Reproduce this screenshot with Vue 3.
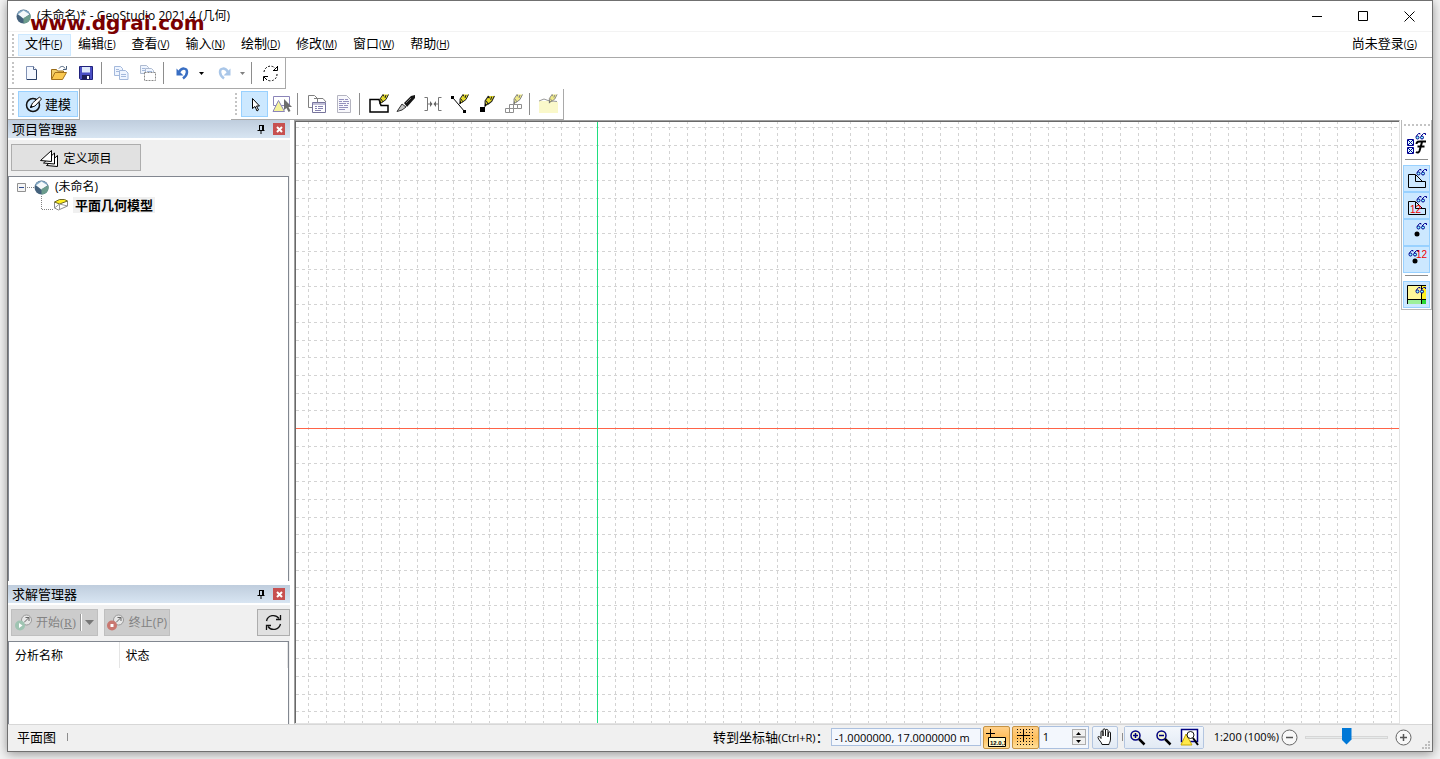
<script setup>
import { ref } from 'vue'

var menus = [
    { text: '文件', key: 'F', active: true },
    { text: '编辑', key: 'E' },
    { text: '查看', key: 'V' },
    { text: '输入', key: 'N' },
    { text: '绘制', key: 'D' },
    { text: '修改', key: 'M' },
    { text: '窗口', key: 'W' },
    { text: '帮助', key: 'H' }
]

var coords = ref('-1.0000000, 17.0000000 m')
var gridStep = ref(1)
var zoom = ref(50)

// grid lines are laid out from the axis crossing
var originX = 301
var originY = 306
var vLines = gridLines(originX, 18.04, 2600)
var hLines = gridLines(originY, 17.7, 1600)

function gridLines(origin, step, max) {
    var lines = []
    for(var i = -Math.floor(origin / step); origin + i * step < max; i++) {
        if(i !== 0) lines.push(origin + Math.round(i * step) + 0.5)
    }
    return lines
}

function stepGrid(n) {
    gridStep.value = Math.max(1, Number(gridStep.value) + n)
}
</script>

<template>
    <div class="desktop">
        <svg class="defs" width="0" height="0" aria-hidden="true">
            <symbol id="pencil" viewBox="0 0 10 11">
                <path d="M1 10V5L4 .5H9.5L7 5.5 3 8.5z" fill="#e6dc28" />
                <path d="M1 10V5L4 .5M3 8.5L7 5.5 9.5 .5M2 5l2 3M4 .5l1 2M6 4l1-3" fill="none" stroke="#222" />
                <path d="M.5 10.5L1 7l2 1.5z" />
            </symbol>
            <symbol id="glasses" viewBox="0 0 11 7">
                <g fill="#8ff" stroke="#000090">
                    <circle cx="2.5" cy="4.5" r="1.5" />
                    <circle cx="7" cy="4.5" r="1.5" />
                    <path d="M1 3.5L3.5 .5H5v1M6 3L8.5 .5h2v1.5" fill="none" />
                </g>
            </symbol>
            <symbol id="globe" viewBox="0 0 14 14">
                <circle cx="7" cy="7" r="6.5" fill="#44617c" />
                <path d="M1 5a6.5 6.5 0 0 1 12 0L7 8z" fill="#83a9c5" />
                <path d="M2 5l5-3.5L12.5 5 7 9z" fill="#f5f9fa" />
                <path d="M7 8.500L13.4 5a6.5 6.5 0 0 1-6.4 8.5z" fill="#6c9c8d" />
            </symbol>
            <symbol id="pin" viewBox="0 0 8 10">
                <path d="M2.5 1v5M2 1.5h4M.5 6.500h7M4 7v3" fill="none" stroke="#000" />
                <path d="M5 1h2v5H5z" />
            </symbol>
            <symbol id="lens" viewBox="0 0 17 17">
                <circle cx="6.5" cy="6.5" r="4.5" fill="#f6f7d0" stroke="#000080" stroke-width="1.5" />
                <path d="M10 10l5.5 5.5" stroke="#000" stroke-width="2.5" />
            </symbol>
        </svg>

        <div class="window">
            <header class="titlebar">
                <svg class="logo" width="15" height="15"><use href="#globe" /></svg>
                <span class="title">(未命名)* - GeoStudio 2021.4 (几何)</span>
                <span class="watermark">www.dgrai.com</span>
                <div class="win-btns">
                    <button aria-label="最小化"><svg width="11" height="11"><path d="M0 5.5h10" stroke="#000" /></svg></button>
                    <button aria-label="最大化"><svg width="11" height="11"><path d="M.5 .5h9v9h-9z" fill="none" stroke="#000" /></svg></button>
                    <button aria-label="关闭"><svg width="11" height="11"><path d="M.5 .5l10 10M10.5 .5l-10 10" stroke="#000" /></svg></button>
                </div>
            </header>

            <nav class="menubar">
                <i class="grip"></i>
                <button v-for="m in menus" :key="m.key" class="menu" :class="{ active: m.active }">{{ m.text }}<small>(<u>{{ m.key }}</u>)</small></button>
                <button class="menu login">尚未登录<small>(<u>G</u>)</small></button>
            </nav>

            <div class="toolrow">
                <div class="toolbar">
                    <i class="grip"></i>
                    <button class="tool" aria-label="新建">
                        <svg width="16" height="16"><path d="M2.5 1.5h7l3 3v10h-10z" fill="#f4f8ff" stroke="#8192b5" /><path d="M12.5 5v9.5H3" fill="none" stroke="#2a3f66" /><path d="M9.5 1.5v3h3" fill="#fff" stroke="#52658a" /></svg>
                    </button>
                    <button class="tool" aria-label="打开">
                        <svg width="18" height="16"><path d="M1.5 14V4.5h5l1 1.5h6v2" fill="#f1cf6b" stroke="#9a6b18" /><path d="M1.5 14.5L5 7.5h11.5l-4 7z" fill="#fbc94f" stroke="#a5731b" /><path d="M9 3.5c2-3 5-2.5 6 0M16.5 1v3.5H13" fill="none" stroke="#4b617c" /></svg>
                    </button>
                    <button class="tool" aria-label="保存">
                        <svg width="16" height="16"><path d="M1.5 1.5h13v13h-12l-1-1z" fill="#4a4fc4" stroke="#20227c" /><path d="M4 2h8v5.5H4z" fill="#dfe9fb" /><path d="M4 10h8v4.5H4z" fill="#1e2058" /><path d="M9 11h2v3H9z" fill="#fff" /></svg>
                    </button>
                    <i class="sep"></i>
                    <button class="tool" aria-label="复制">
                        <svg width="16" height="16"><g fill="#eff5ff" stroke="#a4b9dc"><path d="M1.5 1.5h6l2 2v7h-8z" /><path d="M6.5 5.5h6l2.5 2.5v6.5H6.5z" /><path d="M3 4.5h3M3 6.5h3M8 9.5h5M8 11.5h5" /></g></svg>
                    </button>
                    <button class="tool" aria-label="复制图形">
                        <svg width="18" height="18"><g fill="#eff5ff" stroke="#aebbd0"><path d="M1.5 1.5h6l2 2v6h-8z" /><path d="M6.5 4.5h6l2 2v5h-8z" /></g><path d="M5.5 8.5h11v8h-11z" fill="#fff" stroke="#888" stroke-dasharray="2 1" /><path d="M8 7.5h5M3 4.5h3M3 6.5h3" stroke="#a4b9dc" /></svg>
                    </button>
                    <i class="sep"></i>
                    <div class="split">
                        <button class="tool" aria-label="撤消">
                            <svg width="16" height="16"><path d="M4 7C7 2 12 3 12 7c0 3-2 5-4 6.5" fill="none" stroke="#386ec3" stroke-width="2.5" /><path d="M1.5 3.5v7h7z" fill="#386ec3" /></svg>
                        </button>
                        <button class="drop" aria-label="撤消列表"><svg width="5" height="3"><path d="M0 0h5L2.5 3z" /></svg></button>
                    </div>
                    <div class="split redo">
                        <button class="tool" aria-label="重做">
                            <svg width="16" height="16"><path d="M12 7C9 2 4 3 4 7c0 3 2 5 4 6.5" fill="none" stroke="#a9c6e8" stroke-width="2.5" /><path d="M14.5 3.5v7h-7z" fill="#a9c6e8" /></svg>
                        </button>
                        <button class="drop" aria-label="重做列表"><svg width="5" height="3"><path d="M0 0h5L2.5 3z" fill="#808080" /></svg></button>
                    </div>
                    <i class="sep"></i>
                    <button class="tool" aria-label="刷新">
                        <svg width="17" height="17"><g fill="none" stroke="#000"><path d="M2 7a6.5 6.5 0 0 1 11-4M15 9a6.5 6.5 0 0 1-11 5" stroke-dasharray="2 1.5" /><path d="M15.5 1v4.5H11M1.5 16v-4.5H6M12 5l3-3M2 12l3 3" /></g></svg>
                    </button>
                </div>
            </div>

            <div class="toolrow second">
                <div class="toolbar">
                    <i class="grip"></i>
                    <button class="tool wide on">
                        <svg width="18" height="18"><circle cx="8" cy="10" r="6.5" fill="none" stroke="#111" stroke-width="1.5" /><path d="M5.5 12.5l2-4.5 7-6 2 2-6.5 7z" fill="#fff" stroke="#111" /><path d="M5 13l3-1-2-2z" /></svg>
                        建模
                    </button>
                </div>
                <div class="toolbar model">
                    <i class="grip"></i>
                    <button class="tool on" aria-label="选择">
                        <svg width="16" height="18"><path d="M5.5 3.5v10l2.5-2 2 4.5 1.5-1-2-4h3z" fill="#fff" stroke="#000" /></svg>
                    </button>
                    <button class="tool" aria-label="选择区域">
                        <svg width="20" height="18"><path d="M1.5 1.5h16v9h-16z" fill="#fff" stroke="#8a84b8" /><path d="M1 16.5L6.5 5.5l6 11z" fill="#f5f39a" stroke="#8a84b8" /><path d="M12 4v11l2.5-2 2 4 2-1-2-4H20z" fill="#6d6d6d" /></svg>
                    </button>
                    <i class="sep"></i>
                    <button class="tool" aria-label="复制分析">
                        <svg width="20" height="20"><path d="M1.5 1.5h6l3 3v9h-9z" fill="#fff" stroke="#808080" /><path d="M7 4.5h9l3 3.5" fill="none" stroke="#808080" /><path d="M5.5 8.5h13v10h-13z" fill="#fff" stroke="#77749c" /><path d="M5 10h14M8 12.5h2m1 0h5M8 14.5h2m1 0h5M8 16.5h6" stroke="#8581b0" /></svg>
                    </button>
                    <button class="tool" aria-label="报告">
                        <svg width="16" height="18"><path d="M1.5 .5h9l4 4v13h-13z" fill="#f8f8fc" stroke="#b4b4c0" /><path d="M3 4.5h5m1 0h3M3 6.5h3m1 0h6M3 8.5h7m1 0h2M3 10.5h4m1 0h4M3 12.5h9M3 14.5h6" stroke="#9490bd" /></svg>
                    </button>
                    <i class="sep"></i>
                    <button class="tool" aria-label="绘制区域">
                        <svg width="20" height="20"><path d="M1 5.500h9l2 6h7V18H1z" fill="none" stroke="#000" stroke-width="1.5" /><use href="#pencil" x="10" y="0" width="10" height="11" /></svg>
                    </button>
                    <button class="tool" aria-label="剪切区域">
                        <svg width="20" height="18"><path d="M1 16.5L6 9l4 3-4 3z" fill="#c4c4c4" stroke="#333" /><path d="M8 8l7-7 4-1v3L11 12z" fill="#151515" /><path d="M10 8l5-5" stroke="#777" /></svg>
                    </button>
                    <button class="tool" aria-label="合并">
                        <svg width="18" height="16"><path d="M.5 1.5h3v13h-3M17.5 1.5h-3v13h3M4 8h4M10 8h4" fill="none" stroke="#777" /><path d="M8.5 8L6 5v6zM9.5 8L12 5v6z" fill="#666" /></svg>
                    </button>
                    <button class="tool" aria-label="绘制线">
                        <svg width="20" height="20"><path d="M3 4l12 14" stroke="#000" /><path d="M1 2h3v3H1zM13 16h3v3h-3z" /><use href="#pencil" x="9" y="0" width="10" height="11" /></svg>
                    </button>
                    <button class="tool" aria-label="绘制点">
                        <svg width="20" height="18"><path d="M3 12h5v5H3z" /><use href="#pencil" x="7" y="0" width="11" height="13" /></svg>
                    </button>
                    <button class="tool" aria-label="绘制网格">
                        <svg class="dim" width="20" height="20"><path d="M1.5 14.5h4v4h-4zM5.5 14.5h4v4h-4zM5.5 10.5h4v4M9.5 10.5h4v4h-4M13.5 10.5h4v4h-4M5.5 10.5v4" fill="none" stroke="#333" /><use href="#pencil" x="9" y="0" width="10" height="11" /></svg>
                    </button>
                    <i class="sep"></i>
                    <button class="tool" aria-label="绘制表面">
                        <svg class="dim" width="20" height="20"><path d="M0 7h11l8 1v11H0z" fill="#f7f3a0" /><path d="M0 7l5-2 4 1.5 9 1" fill="none" stroke="#444" /><use href="#pencil" x="9" y="0" width="10" height="10" /></svg>
                    </button>
                </div>
            </div>

            <main class="main">
                <aside class="side">
                    <section class="panel project">
                        <h2><span>项目管理器</span><svg width="8" height="10"><use href="#pin" /></svg><button class="shut" aria-label="关闭项目管理器"><svg width="7" height="7"><path d="M1 1l5 5M6 1L1 6" stroke="#fff" stroke-width="2" /></svg></button></h2>
                        <div class="panel-tools">
                            <button class="push define">
                                <svg width="20" height="19"><g fill="#fff" stroke="#000"><path d="M6.5 16.5l11-10v11z" /><path d="M3.5 14l11-10v11z" /><path d="M.5 11.500l11-10v11z" /></g></svg>
                                定义项目
                            </button>
                        </div>
                        <div class="tree">
                            <div class="node">
                                <svg width="17" height="15"><path d="M.5 3.5h8v8h-8z" fill="#f5f5f5" stroke="#919191" /><path d="M2 7.5h5" stroke="#334f91" /><path d="M10 7.5h7" stroke="#808080" stroke-dasharray="1 1" /></svg>
                                <svg width="15" height="15"><use href="#globe" /></svg>
                                <span>(未命名)</span>
                            </div>
                            <div class="node child">
                                <svg width="12" height="18"><path d="M.5 0v13.5H12" fill="none" stroke="#808080" stroke-dasharray="1 1" /></svg>
                                <svg width="16" height="14"><path d="M1.5 4v6l4 2 9-4V3" fill="#fff" stroke="#8a8a8a" /><path d="M1.5 4l5-2.500h5L14.5 3l-8 3z" fill="#ffef20" stroke="#6d6824" /><path d="M1.5 10l5-4 8 2M6.500 6v6" fill="none" stroke="#9a9a9a" /></svg>
                                <b>平面几何模型</b>
                            </div>
                        </div>
                    </section>

                    <section class="panel solve">
                        <h2><span>求解管理器</span><svg width="8" height="10"><use href="#pin" /></svg><button class="shut" aria-label="关闭求解管理器"><svg width="7" height="7"><path d="M1 1l5 5M6 1L1 6" stroke="#fff" stroke-width="2" /></svg></button></h2>
                        <div class="panel-tools">
                            <button class="push off start">
                                <svg width="18" height="17"><circle cx="11.5" cy="6" r="5" fill="#e6e6e6" stroke="#999" /><path d="M9 8.5l5-5M10.5 3.5H14V7" fill="none" stroke="#666" /><circle cx="5" cy="11.5" r="5" fill="#9fc4b2" /><path d="M4 9l3.5 2.5L4 14z" fill="#fff" /></svg>
                                <span>开始(<u>R</u>)</span>
                                <svg class="more" width="14" height="19"><path d="M1.5 1v17" stroke="#fff" /><path d="M.5 1v17" stroke="#999" /><path d="M5 7h9l-4.500 5z" fill="#777" /></svg>
                            </button>
                            <button class="push off stop">
                                <svg width="18" height="17"><circle cx="11.5" cy="6" r="5" fill="#e6e6e6" stroke="#999" /><path d="M9 8.5l5-5M10.5 3.5H14V7" fill="none" stroke="#666" /><circle cx="5" cy="11.5" r="5" fill="#c97770" /><path d="M3.5 10h3v3h-3z" fill="#fff" /></svg>
                                终止<span>(P)</span>
                            </button>
                            <button class="push reload" aria-label="刷新">
                                <svg width="17" height="17"><g fill="none" stroke="#111" stroke-width="1.3"><path d="M1.5 7A7 7 0 0 1 14 4.5M15.5 10A7 7 0 0 1 3 12.5" /><path d="M15.5 1v4.5H11M1.5 16v-4.5H6" /></g></svg>
                            </button>
                        </div>
                        <div class="list">
                            <table>
                                <thead><tr><th class="name">分析名称</th><th>状态</th></tr></thead>
                            </table>
                        </div>
                    </section>
                </aside>

                <div class="canvas">
                    <svg width="100%" height="100%" shape-rendering="crispEdges">
                        <g stroke="#d3d3d3" stroke-dasharray="3 3">
                            <line v-for="y in hLines" :key="'h' + y" x1="0" x2="2600" :y1="y" :y2="y" />
                            <line v-for="x in vLines" :key="'v' + x" :x1="x" :x2="x" y1="0" y2="1600" stroke-dashoffset="1" />
                        </g>
                        <line x1="0" x2="2600" :y1="originY + 0.5" :y2="originY + 0.5" stroke="#ff6347" />
                        <line :x1="originX + 0.5" :x2="originX + 0.5" y1="0" y2="1600" stroke="#1fdf80" />
                    </svg>
                </div>

                <div class="rail-area">
                    <div class="rail">
                        <i class="grip flat"></i>
                        <button class="tool" aria-label="字体显示">
                            <svg width="20" height="22"><g fill="#dff" stroke="#000090"><path d="M.5 6.5h6v6h-6zM.5 14.500h6v6h-6z" /><path d="M1 7l5 5M6 7l-5 5M1 15l5 5M6 15l-5 5" /></g><path d="M9.5 11c0-3 3-2.500 5-2.500h4.500M15 9l-2.500 9c-.5 1.500-2 2-3.500 1M10.500 13.500h7" fill="none" stroke="#000" stroke-width="2" /><use href="#glasses" x="8" y="0" width="11" height="7" /></svg>
                        </button>
                        <i class="hsep"></i>
                        <button class="tool on" aria-label="显示区域">
                            <svg width="20" height="20"><path d="M1.5 5.5h7v7h10v6h-17z" fill="none" stroke="#000" /><path d="M9 6l6 6" stroke="#000" /><use href="#glasses" x="9" y="0" width="11" height="7" /></svg>
                        </button>
                        <button class="tool on" aria-label="显示区域编号">
                            <svg width="20" height="20"><path d="M1.5 5.5h7v7h10v6h-17z" fill="none" stroke="#000" /><path d="M9 6l6 6" stroke="#000" /><use href="#glasses" x="9" y="0" width="11" height="7" /><text x="3" y="17" class="num">12</text></svg>
                        </button>
                        <button class="tool on" aria-label="显示点">
                            <svg width="20" height="20"><circle cx="10" cy="11" r="2.5" /><use href="#glasses" x="9" y="0" width="11" height="7" /></svg>
                        </button>
                        <button class="tool on" aria-label="显示点编号">
                            <svg width="20" height="20"><circle cx="8" cy="11" r="2.5" /><use href="#glasses" x="1" y="0" width="11" height="7" /><text x="9" y="8" class="num">12</text></svg>
                        </button>
                        <i class="hsep"></i>
                        <button class="tool on" aria-label="显示材料">
                            <svg width="20" height="20"><path d="M1 1h18v13H1z" fill="#fff799" /><path d="M15 1h4v13h-4z" fill="#fff020" /><path d="M1 14h18v5H1z" fill="#9df09a" /><path d="M15 14h4v5h-4z" fill="#28d833" /><path d="M.5 19V.5H19M.5 14.5H19M14.5 1v18" fill="none" stroke="#000" /><use href="#glasses" x="8" y="2" width="11" height="7" /></svg>
                        </button>
                    </div>
                </div>
            </main>

            <footer class="status">
                <span>平面图</span>
                <i class="tick"></i>
                <label class="goto" for="coords">转到坐标轴<span>(Ctrl+R)</span>：</label>
                <input id="coords" v-model="coords" class="coords" type="text">
                <button class="snap" aria-label="显示坐标">
                    <svg width="20" height="19"><path d="M4.5 1v9M0 5.5h9" stroke="#000" /><path d="M2.5 9.5h17v9h-17z" fill="#fffbd0" stroke="#000" /><text x="4" y="17" class="tiny">12.0,1</text></svg>
                </button>
                <button class="snap" aria-label="捕捉网格">
                    <svg width="18" height="18"><path d="M1 1.5h17M1 4.5h17M1 7.5h17M1 10.5h17M1 13.5h17M1 16.5h17" stroke="#111" stroke-dasharray="1 2" /><path d="M7.5 1v12M1 7.5h13" stroke="#000" /></svg>
                </button>
                <div class="spin">
                    <input v-model="gridStep" type="text" aria-label="网格间距">
                    <div>
                        <button aria-label="增加" @click="stepGrid(1)"><svg width="5" height="3"><path d="M0 3h5L2.5 0z" /></svg></button>
                        <button aria-label="减少" @click="stepGrid(-1)"><svg width="5" height="3"><path d="M0 0h5L2.5 3z" /></svg></button>
                    </div>
                </div>
                <button class="flatbtn hand" aria-label="平移">
                    <svg width="16" height="18"><path d="M5 16.5c0-2-4-5-4-7s2-1 3 1V4c0-1.5 2-1.5 2 0v4-6c0-1.5 2.5-1.5 2.5 0v6-5.5c0-1.5 2.5-1.5 2.5 0V9l.5-4c0-1.5 2-1.5 2 0v6c0 3-1.5 4-1.5 5.5z" fill="#fff" stroke="#111" /></svg>
                </button>
                <i class="tick"></i>
                <div class="zooms">
                    <button class="flatbtn" aria-label="放大"><svg width="17" height="17"><use href="#lens" /><path d="M4 6.5h5M6.5 4v5" stroke="#000080" stroke-width="1.5" /></svg></button>
                    <button class="flatbtn" aria-label="缩小"><svg width="17" height="17"><use href="#lens" /><path d="M4 6.5h5" stroke="#000080" stroke-width="1.5" /></svg></button>
                    <button class="flatbtn" aria-label="缩放到对象"><svg width="19" height="18"><path d="M1.5 1.5h16v12h-16z" fill="#fff" stroke="#000080" stroke-width="1.5" /><path d="M1 17L6 6l6 11z" fill="#ffe94a" stroke="#c9a800" /><circle cx="10.5" cy="7" r="3.5" fill="#fff" stroke="#111" /><path d="M13 10l5 7" stroke="#000" stroke-width="2" /></svg></button>
                </div>
                <span class="scale">1:200 (100%)</span>
                <button class="round" aria-label="缩小比例"><svg width="17" height="17"><circle cx="8.5" cy="8.5" r="7.5" fill="#f8f8f8" stroke="#666" /><path d="M5 8.5h7" stroke="#555" stroke-width="1.5" /></svg></button>
                <input v-model="zoom" class="slider" type="range" min="0" max="100" aria-label="缩放">
                <button class="round" aria-label="放大比例"><svg width="17" height="17"><circle cx="8.5" cy="8.5" r="7.5" fill="#f8f8f8" stroke="#666" /><path d="M5 8.5h7M8.5 5v7" stroke="#555" stroke-width="1.5" /></svg></button>
                <svg class="resize" width="8" height="8"><path d="M6 0h2v2H6zM3 3h2v2H3zM6 3h2v2H6zM0 6h2v2H0zM3 6h2v2H3zM6 6h2v2H6z" fill="#bdbdbd" /></svg>
            </footer>
        </div>
    </div>
</template>

<style>
body {
    margin: 0;
    background: #f4f4f4;
}
</style>

<style scoped>
* {
    box-sizing: border-box;
}
button, input {
    font: inherit;
    color: inherit;
    margin: 0;
    padding: 0;
    border: 0;
    background: none;
}
button {
    display: flex;
    align-items: center;
    justify-content: center;
}
svg {
    display: block;
    flex: none;
}
.defs {
    position: absolute;
}
.desktop {
    height: 100vh;
    padding: 0 7px 7px;
    font: 12px/16px "Open Sans", "Noto Sans CJK SC", sans-serif;
    color: #000;
    overflow: hidden;
}
.window {
    display: flex;
    flex-direction: column;
    height: 100%;
    background: #fff;
    border: 1px solid #707070;
    box-shadow: 0 2px 10px rgba(0, 0, 0, .4);
}

/* title bar */
.titlebar {
    position: relative;
    display: flex;
    align-items: center;
    height: 30px;
    padding-left: 8px;
}
.title {
    margin-left: 6px;
    white-space: nowrap;
}
.watermark {
    position: absolute;
    left: 22px;
    top: 10px;
    font: bold 20px/24px "DejaVu Sans", sans-serif;
    color: #7b0000;
}
.win-btns {
    display: flex;
    margin-left: auto;
}
.win-btns button {
    width: 46px;
    height: 28px;
}

/* menu */
.menubar {
    display: flex;
    align-items: center;
    height: 27px;
    border-top: 1px solid #f3f3f3;
    border-bottom: 1px solid #a9a9a9;
    font-size: 13px;
}
.grip {
    flex: none;
    width: 2px;
    height: 22px;
    margin: 0 4px;
    background: repeating-linear-gradient(#c4c4c4 0 2px, transparent 2px 4px);
}
.menu {
    height: 22px;
    padding: 0 8px 4px 6px;
    border: 1px solid transparent;
}
.menu.active {
    background: #e5f3ff;
    border-color: #cce8ff;
}
.menu.login {
    margin-left: auto;
    margin-right: 6px;
}
small {
    font-size: 10px;
    padding-top: 2px;
}

/* toolbars */
.toolrow {
    display: flex;
    height: 31px;
}
.toolbar {
    display: flex;
    align-items: center;
    padding-right: 1px;
    border-right: 1px solid #a9a9a9;
    border-bottom: 1px solid #a9a9a9;
}
.toolbar.model {
    margin-left: 151px;
}
.tool {
    flex: none;
    width: 27px;
    height: 26px;
    border: 1px solid transparent;
}
.tool.on {
    background: #cce8ff;
    border-color: #99d1ff;
}
.tool.wide {
    width: 60px;
    gap: 2px;
    font-size: 13px;
}
.sep {
    width: 1px;
    height: 22px;
    margin: 0 5px 0 2px;
    background: #8d8d8d;
}
.split {
    display: flex;
}
.split.redo {
    margin: 0 2px 0 4px;
}
.drop {
    width: 10px;
}
.dim {
    opacity: .55;
}

/* body */
.main {
    display: flex;
    flex: 1;
    min-height: 0;
}
.side {
    display: flex;
    flex-direction: column;
    gap: 4px;
    width: 282px;
    margin-right: 4px;
}
.panel {
    display: flex;
    flex-direction: column;
    background: #f0f0f0;
}
.project {
    flex: 1;
}
.solve {
    height: 139px;
}
.panel h2 {
    display: flex;
    align-items: center;
    height: 20px;
    margin: 0;
    padding: 0 5px 0 4px;
    border-bottom: 2px solid #fff;
    background: linear-gradient(#bfcddd, #d8e5f2);
    font-size: 13px;
    font-weight: normal;
}
.panel h2 span {
    flex: 1;
}
.shut {
    width: 12px;
    height: 12px;
    margin-left: 8px;
    background: #c75050;
}
.panel-tools {
    display: flex;
    padding: 4px 0 5px 3px;
}
.push {
    height: 27px;
    border: 1px solid #adadad;
    background: #e1e1e1;
}
.define {
    width: 130px;
    padding-top: 2px;
    gap: 3px;
}
.push.off {
    color: #838383;
    background: #ccc;
    border-color: #bfbfbf;
}
.start {
    width: 87px;
    gap: 3px;
    font-family: "Liberation Serif", "Noto Sans CJK SC", serif;
}
.stop {
    width: 66px;
    margin-left: 6px;
}
.stop svg {
    margin-right: 4px;
}
.start .more {
    margin-left: 1px;
}
.reload {
    width: 33px;
    margin-left: auto;
}
.tree, .list {
    flex: 1;
    margin-right: 1px;
    border: 1px solid #828790;
    border-bottom: 0;
    background: #fff;
}
.tree {
    padding: 1px 8px;
}
.node {
    display: flex;
    align-items: center;
    height: 18px;
}
.node span {
    margin-left: 6px;
}
.child {
    padding-left: 24px;
}
.child b {
    margin-left: 4px;
    padding: 0 2px;
    background: #f0f0f0;
    font-size: 13px;
}
table {
    width: 100%;
    border-collapse: collapse;
}
th {
    height: 26px;
    padding: 2px 6px 0;
    border-right: 1px solid #e5e5e5;
    font-weight: normal;
    text-align: left;
}
.name {
    width: 110px;
}
.canvas {
    flex: 1;
    min-width: 0;
    border: solid #e3e3e3;
    border-width: 0 1px 1px 0;
    overflow: hidden;
    background: #fff;
    border-top: 2px groove #a0a0a0;
    border-left: 2px groove #a0a0a0;
    border-top: 1px solid #a0a0a0;
    border-left: 1px solid #a0a0a0;
    box-shadow: inset 1px 1px #696969;
    padding: 1px 0 0 1px;
}
.rail-area {
    padding-left: 1px;
}
.rail {
    display: flex;
    flex-direction: column;
    align-items: center;
    width: 31px;
    padding: 4px 0 1px;
    border: solid #b9b9b9;
    border-width: 0 1px 1px;
}
.grip.flat {
    width: 26px;
    height: 2px;
    margin: 0 0 4px;
    background: repeating-linear-gradient(90deg, #c4c4c4 0 2px, transparent 2px 4px);
}
.rail .tool {
    height: 27px;
}
.hsep {
    width: 23px;
    height: 1px;
    margin: 2px 0 5px;
    background: #8d8d8d;
}
.num {
    font: 10px "Liberation Sans", sans-serif;
    fill: #f00000;
}

/* status bar */
.status {
    display: flex;
    align-items: center;
    height: 27px;
    padding: 0 2px 2px 9px;
    border-top: 1px solid #d7d7d7;
    background: #f0f0f0;
    font-size: 13px;
}
.tick {
    width: 1px;
    height: 8px;
    margin-left: 11px;
    background: #8d8d8d;
}
.goto {
    margin-left: auto;
    margin-right: 2px;
}
.goto span, .scale {
    font-size: 11px;
}
.coords {
    width: 150px;
    height: 18px;
    margin-right: 2px;
    padding: 0 3px;
    border: 1px solid #abc0df;
    background: #f3f7fd;
    font-size: 11px;
}
.snap {
    width: 27px;
    height: 23px;
    margin-right: 2px;
    border: 1px solid #c59343;
    border-radius: 2px;
    background: linear-gradient(#ffd08a, #ffbf5c 50%, #ffe09a);
}
.snap + .spin {
    margin-left: -2px;
}
.tiny {
    font: bold 6px "Liberation Sans", sans-serif;
}
.spin {
    display: flex;
    align-items: center;
    width: 50px;
    height: 23px;
    padding: 0 2px 0 3px;
    border: 1px solid #abc0df;
    background: #f3f7fd;
    font-size: 11px;
}
.spin input {
    flex: 1;
    min-width: 0;
}
.spin button {
    width: 14px;
    height: 8px;
    border: 1px solid #adadad;
    background: #f0f0f0;
}
.flatbtn {
    width: 26px;
    height: 21px;
    background: linear-gradient(#f3f7fc, #e2eaf4);
}
.hand {
    height: 23px;
    margin-left: 3px;
    border: 1px solid #b4c6e0;
    border-radius: 2px;
}
.hand + .tick {
    margin: 0 1px 0 4px;
}
.zooms {
    display: flex;
    border: 1px solid #b4c6e0;
    border-radius: 2px;
}
.scale {
    margin: 0 2px 0 10px;
}
.slider {
    width: 83px;
    height: 18px;
    margin: 0 7px;
    appearance: none;
}
.slider::-webkit-slider-runnable-track {
    height: 3px;
    border: 1px solid #d6d6d6;
    background: #e7eaea;
}
.slider::-webkit-slider-thumb {
    appearance: none;
    width: 10px;
    height: 17px;
    margin-top: -9px;
    background: #0078d7;
    clip-path: polygon(0 0, 100% 0, 100% 70%, 50% 100%, 0 70%);
}
.resize {
    align-self: flex-end;
    margin-left: 10px;
}
</style>
